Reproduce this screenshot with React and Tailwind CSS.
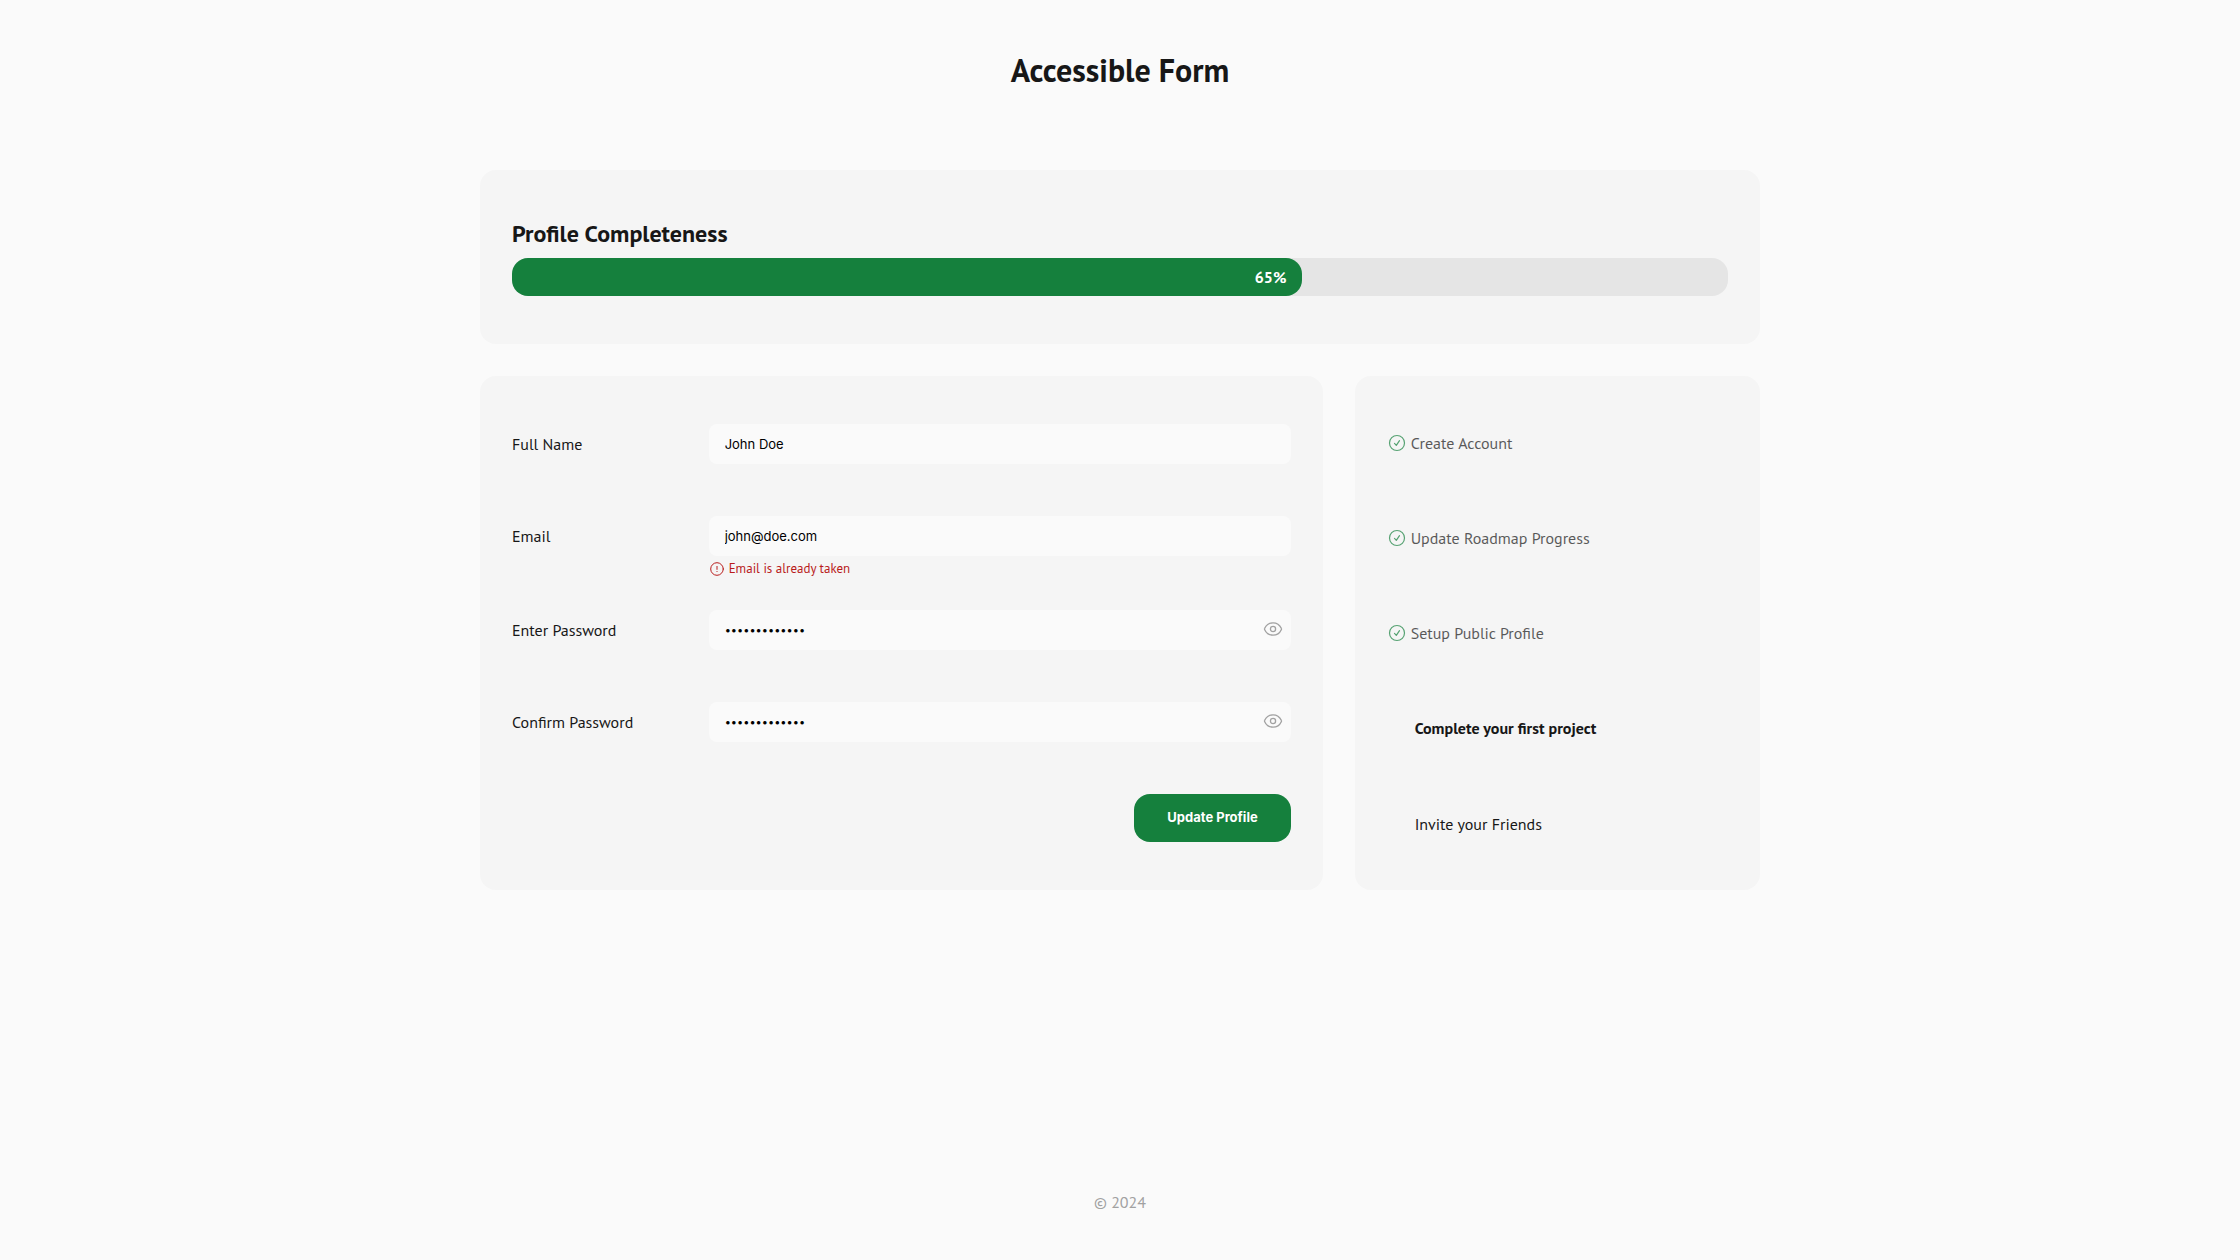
const text = 'font-["PT_Sans","Noto_Sans",sans-serif]';
const ui = 'font-["Inter",sans-serif]';

function CheckIcon() {
  return (
    <svg viewBox="0 0 20 20" className="size-5 shrink-0" fill="none" stroke="#15803d" strokeWidth="1.2" strokeLinecap="round" strokeLinejoin="round" aria-hidden="true">
      <circle cx="10" cy="10" r="7.5" />
      <path d="M7.5 10.4l1.8 1.9 3.2-4.6" />
    </svg>
  );
}

function AlertIcon() {
  return (
    <svg viewBox="0 0 16 16" className="size-4 shrink-0" fill="none" stroke="#b91c1c" strokeWidth="1" strokeLinecap="round" aria-hidden="true">
      <circle cx="8" cy="8" r="6.3" />
      <path d="M8 5.4v3M8 10.4v.1" />
    </svg>
  );
}

function EyeIcon() {
  return (
    <svg viewBox="0 0 20 20" className="size-5" fill="none" stroke="currentColor" strokeWidth="1.3" strokeLinejoin="round" aria-hidden="true">
      <path d="M1.7 10.7c-.3-.5-.3-.9 0-1.4C3.4 5.6 6.5 3.8 10 3.8s6.6 1.8 8.3 5.5c.3.5.3.9 0 1.4-1.7 3.7-4.8 5.5-8.3 5.5s-6.600-1.800-8.300-5.500z" />
      <circle cx="10" cy="10" r="2.6" />
    </svg>
  );
}

function Field({ id, label, type, value, error }) {
  return (
    <div className="flex items-start gap-0.5">
      <label htmlFor={id} className="w-1/4 leading-10">{label}</label>
      <div className="flex-1">
        <div className="relative">
          <input
            id={id}
            type={type}
            defaultValue={value}
            aria-invalid={error ? true : undefined}
            aria-describedby={error ? id + '-error' : undefined}
            className={`${ui} block h-10 w-full rounded-lg bg-[#fafafa] px-4 text-black outline-none ${type === 'password' ? 'text-[11px]' : 'text-[13px]'}`}
          />
          {type === 'password' && (
            <button type="button" aria-label={'Show ' + label} className="absolute inset-y-0 right-2 pb-0.5 text-neutral-400">
              <EyeIcon />
            </button>
          )}
        </div>
        <div className="min-h-5">
          {error && (
            <p id={id + '-error'} className="flex items-center gap-1 pt-1 text-[13px] leading-[18px] text-[#b91c1c]">
              <AlertIcon />
              {error}
            </p>
          )}
        </div>
      </div>
    </div>
  );
}

const steps = [
  { name: 'Create Account', state: 'done' },
  { name: 'Update Roadmap Progress', state: 'done' },
  { name: 'Setup Public Profile', state: 'done' },
  { name: 'Complete your first project', state: 'current' },
  { name: 'Invite your Friends', state: 'todo' },
];

const stepStyle = {
  done: 'gap-1 opacity-70',
  current: 'pl-7 font-bold',
  todo: 'pl-7',
};

export default function App() {
  const progress = 65;
  return (
    <div className={`${text} flex min-h-screen flex-col items-center bg-[#fafafa] px-8 text-base text-neutral-900`}>
      <header className="pt-12">
        <h1 className="text-[32px] leading-11 font-bold">Accessible Form</h1>
      </header>

      <main className="mt-[78px] grid w-full max-w-[1280px] grid-cols-3 gap-8">
        <section className="col-span-3 rounded-2xl bg-[#f5f5f5] px-8 py-12">
          <h2 id="progress-title" className="mb-2 text-2xl leading-8 font-bold">Profile Completeness</h2>
          <div role="progressbar" aria-labelledby="progress-title" aria-valuenow={progress} aria-valuemin={0} aria-valuemax={100} className="rounded-2xl bg-neutral-200">
            <div className="rounded-2xl bg-[#15803d] px-4 text-right leading-[38px] font-bold text-white" style={{ width: progress + '%' }}>
              {progress}%
            </div>
          </div>
        </section>

        <form className="col-span-2 flex flex-col gap-8 rounded-2xl bg-[#f5f5f5] px-8 py-12" onSubmit={(e) => e.preventDefault()}>
          <Field id="name" label="Full Name" type="text" value="John Doe" />
          <Field id="email" label="Email" type="email" value="john@doe.com" error="Email is already taken" />
          <Field id="password" label="Enter Password" type="password" value="correcthorse1" />
          <Field id="confirm" label="Confirm Password" type="password" value="correcthorse1" />
          <button type="submit" className={`${ui} h-12 self-end rounded-2xl bg-[#15803d] px-[33px] text-[13px] font-bold text-white`}>
            Update Profile
          </button>
        </form>

        <ol className="flex flex-col justify-between rounded-2xl bg-[#f5f5f5] px-8 py-12">
          {steps.map((step) => (
            <li key={step.name} aria-current={step.state === 'current' ? 'step' : undefined} className={`flex h-[37px] items-center ${stepStyle[step.state]}`}>
              {step.state === 'done' && <CheckIcon />}
              {step.name}
            </li>
          ))}
        </ol>
      </main>

      <footer className="mt-auto pb-12 leading-5 text-neutral-400">© 2024</footer>
    </div>
  );
}
